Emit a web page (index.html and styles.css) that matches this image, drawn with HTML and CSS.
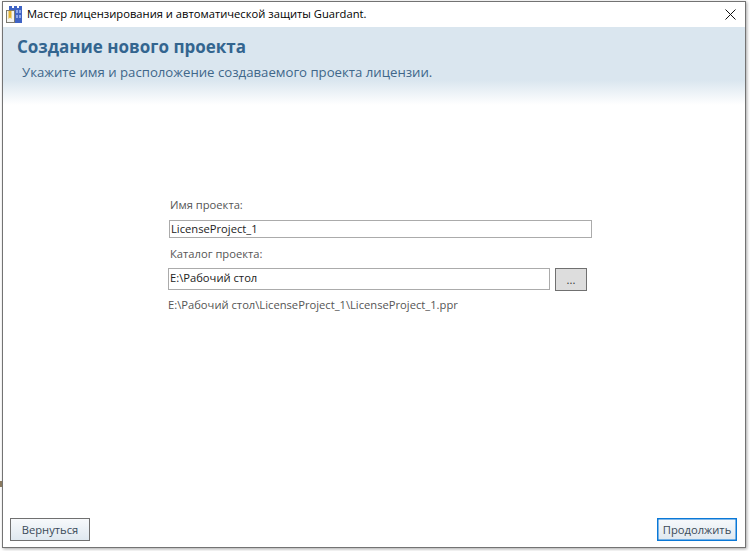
FILE: index.html
```html
<!DOCTYPE html>
<html lang="ru">
<head>
<meta charset="utf-8">
<title>Мастер лицензирования</title>
<link rel="stylesheet" href="styles.css">
</head>
<body>
<span class="edge-mark"></span>
<div class="window">
  <div class="titlebar">
    <svg class="app-icon" width="16" height="17" viewBox="0 0 16 17">
      <path d="M3 0h3v2h2V0h3v2h2V0h3v17H3z" fill="#3f63c4"/>
      <path d="M10 4h2v3h-2zM13 4h2v3h-2zM10 9h2v3h-2zM13 9h2v3h-2z" fill="#8fa8ea"/>
      <rect x="0.5" y="4.5" width="8" height="12" fill="#f4f4f0" stroke="#7d7a70"/>
      <path d="M2.5 5h3v8l-1.5-1.5L2.5 13z" fill="#e5b32f"/>
    </svg>
    <span class="title-text">Мастер лицензирования и автоматической защиты Guardant.</span>
    <svg class="close" width="11" height="11" viewBox="0 0 11 11"><path d="M0.5 0.5l10 10M10.5 0.5l-10 10" stroke="#111" fill="none"/></svg>
  </div>
  <div class="banner">
    <h1 class="banner-title">Создание нового проекта</h1>
    <p class="banner-sub">Укажите имя и расположение создаваемого проекта лицензии.</p>
  </div>
  <div class="content">
    <form class="form">
      <div class="label">Имя проекта:</div>
      <div class="field field-name">LicenseProject_1</div>
      <div class="label label-dir">Каталог проекта:</div>
      <div class="dir-row">
        <div class="field field-dir">E:\Рабочий стол</div>
        <div class="browse">...</div>
      </div>
      <div class="path">E:\Рабочий стол\LicenseProject_1\LicenseProject_1.ppr</div>
    </form>
  </div>
  <div class="footer">
    <div class="btn">Вернуться</div>
    <div class="btn btn-primary">Продолжить</div>
  </div>
</div>
</body>
</html>
```
FILE: styles.css
```css
html, body {
  margin: 0;
  width: 750px;
  height: 551px;
  overflow: hidden;
  background: #fff;
}
body {
  padding: 1px 0 0 2px;
  box-sizing: border-box;
  font-family: "Open Sans", "Noto Sans", sans-serif;
  font-size: 11.2px;
  color: #444;
}
.edge-mark {
  position: absolute;
  left: 0;
  top: 481px;
  width: 2px;
  height: 6px;
  background: #8a7a60;
}
.window {
  width: 744px;
  height: 547px;
  box-sizing: border-box;
  border: 1px solid #737373;
  background: #fff;
  box-shadow: 1px 1px 3px rgba(0,0,0,.35);
  display: flex;
  flex-direction: column;
}
.titlebar {
  height: 25px;
  flex: none;
  display: flex;
  align-items: center;
  padding: 0 9px 0 3px;
  color: #000;
}
.app-icon { flex: none; margin-right: 5px; }
.title-text { flex: 1; font-size: 11.2px; position: relative; top: -1px; }
.banner {
  height: 78px;
  flex: none;
  box-sizing: border-box;
  padding: 8px 14px 0;
  background: linear-gradient(#dae6ef 0, #dae6ef 68%, #fff 100%);
}
.banner-title {
  margin: 0;
  font-size: 17px;
  line-height: 23px;
  font-weight: 700;
  color: #33658f;
}
.banner-sub {
  margin: 5px 0 0 5px;
  font-size: 13.2px;
  line-height: 18px;
  color: #40678a;
}
.content { flex: 1; padding: 92px 0 0 165px; }
.form { width: 424px; }
.label { line-height: 16px; padding-left: 2px; color: #555; }
.field {
  box-sizing: border-box;
  border: 1px solid #ababab;
  color: #222;
  padding-left: 1px;
  background: #fff;
}
.field-name { height: 18px; line-height: 16px; margin: 7px 0 0 1px; }
.label-dir { margin-top: 8px; }
.dir-row { display: flex; align-items: flex-start; margin-top: 6px; }
.field-dir { width: 382px; height: 22px; line-height: 17px; }
.browse {
  width: 32px;
  height: 23px;
  margin-left: 5px;
  box-sizing: border-box;
  border: 1px solid #707070;
  background: #dddddd;
  text-align: center;
  line-height: 21px;
  color: #333;
}
.path { margin-top: 6px; line-height: 16px; color: #555; }
.footer {
  flex: none;
  display: flex;
  justify-content: space-between;
  padding: 0 8px 6px 7px;
}
.btn {
  width: 80px;
  height: 23px;
  box-sizing: border-box;
  border: 1px solid #707070;
  background: linear-gradient(#f7f9fb, #dfe8f0);
  text-align: center;
  line-height: 21px;
  color: #3a4a58;
}
.btn-primary { border-color: #0a78d7; box-shadow: inset 0 0 0 0.5px #0a78d7; }
```
